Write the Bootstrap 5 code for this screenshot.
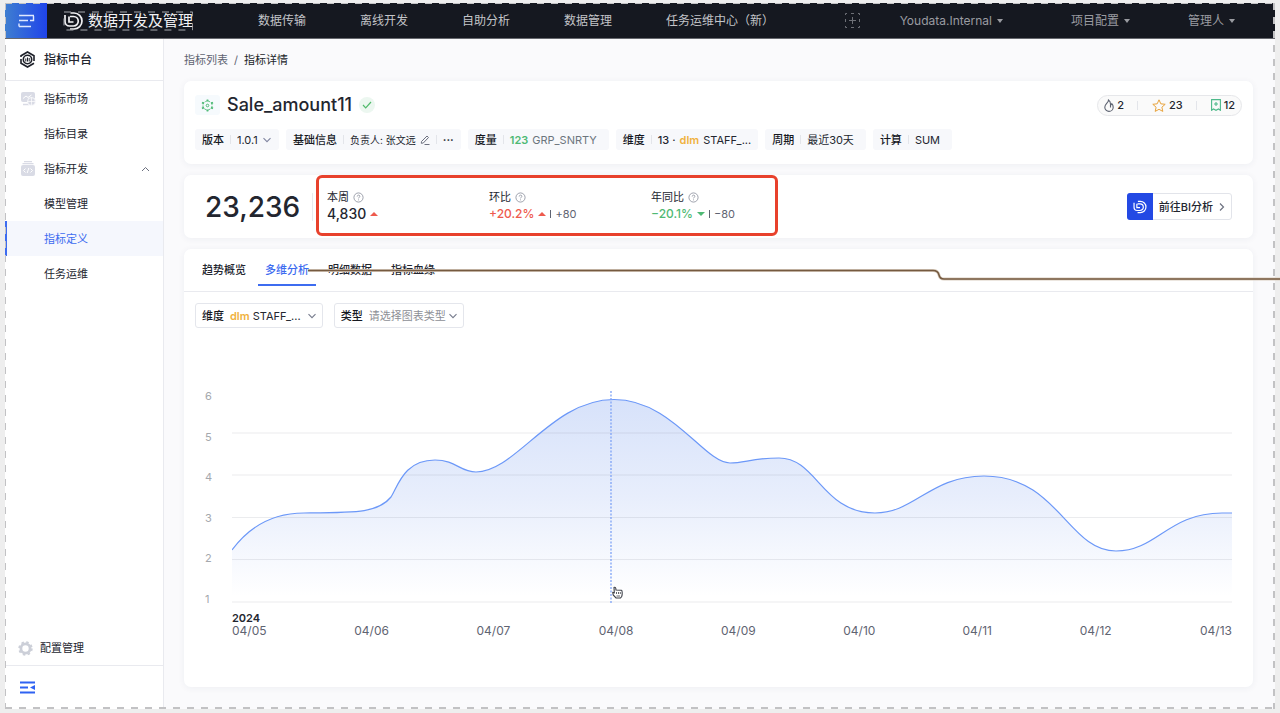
<!DOCTYPE html>
<html lang="zh-CN">
<head>
<meta charset="utf-8">
<meta name="viewport" content="width=device-width, initial-scale=1">
<title>指标详情</title>
<link href="https://cdn.jsdelivr.net/npm/bootstrap@5.3.0/dist/css/bootstrap.min.css" rel="stylesheet">
<style>
  :root { --ink:#23262f; --soft:#5f6472; --line:#e9eaef; --brand:#3d6cf0; --chip:#f7f8fb; --up:#ee5a4d; --down:#4fb974; --amber:#f0b23e; }
  body { background:#eee; color:var(--ink); font-family:Inter,"Noto Sans CJK SC",sans-serif; font-size:11px; line-height:16px; overflow-x:hidden; }
  a { color:inherit; text-decoration:none; }
  svg { display:block; flex:none; }
  .fw-mid { font-weight:500; }
  .frame { margin:3px 5px 4px; min-height:calc(100vh - 7px); background:#fafafc; }
  .frame::after { content:""; position:absolute; inset:0; pointer-events:none;
    background:
      repeating-linear-gradient(90deg,#c2c2c4 0 7px,transparent 7px 14px) top/100% 1px no-repeat,
      repeating-linear-gradient(90deg,#c2c2c4 0 7px,transparent 7px 14px) bottom/100% 2px no-repeat,
      repeating-linear-gradient(#c2c2c4 0 7px,transparent 7px 14px) left/1px 100% no-repeat,
      repeating-linear-gradient(#c2c2c4 0 7px,transparent 7px 14px) right/2px 100% no-repeat; }
  .topbar { height:36px; background:#151820; color:#c3c4c8; font-size:12px; border-radius:0 3px 0 0; border-bottom:1px solid #66686e; padding-right:40px; }
  .menu-btn { width:42px; background:linear-gradient(90deg,#3f7ed0,#1f44ea); border:0; }
  .brand-text { font-size:15px; color:#f2f2f4; }
  .main-links { gap:54px; margin-left:65px; }
  .dim { color:#9a9ba1; }
  .dim a { gap:5px; }
  .project-link { margin:0 58px 0 68px; }
  .caret { border:3px solid transparent; border-top:4px solid currentColor; border-bottom:0; }
  .add-box { color:#6d6f76; margin-right:40px; }
  .side { width:159px; background:#fff; border-right:1px solid var(--line); }
  .side-title { height:42px; font-size:12px; border-bottom:1px solid var(--line); padding-left:14px; gap:8px; }
  .side-link { height:35px; padding:0 13px 0 38px; border-left:1px solid transparent; }
  .side-link.with-icon { padding-left:14px; gap:8px; }
  .side-link.current { background:#f5f7fd; color:var(--brand); border-left:2px solid var(--brand); padding-left:37px; }
  .side-foot { height:35px; padding-left:13px; gap:7px; border-bottom:1px solid var(--line); }
  .side-toggle { height:43px; padding-left:15px; }
  .content-area { padding:12px 22px 22px 20px; gap:11px; }
  .crumbs { height:18px; margin-bottom:1px; gap:6px; color:var(--soft); }
  .panel { background:#fff; border-radius:7px; box-shadow:0 1px 7px rgba(40,45,80,.06); }
  .head-panel { padding:12px 11px 14px; gap:12px; }
  .hex-box { width:25px; height:20px; background:#f6fafd; border-radius:3px; }
  .metric-name { font-size:18px; line-height:24px; font-weight:500; margin:0 7px; }
  .ok-dot { width:16px; height:16px; border-radius:50%; background:#ecf7f0; }
  .stats { height:21px; border:1px solid #e6e7ea; border-radius:11px; background:#fafafa; padding:0 6px; }
  .stats button { gap:3px; font-weight:500; color:var(--ink); }
  .stats .vr-thin { margin:0 14px 0 13px; }
  .chips { gap:7px; }
  .chip { height:21px; background:var(--chip); border-radius:3px; padding:0 7px; }
  .chip.roomy { padding-right:12px; }
  .owner { font-size:10px; }
  .chip b, .pick label { font-weight:500; color:#16181f; }
  .vr-thin { width:1px; height:9px; background:#e3e5ea; margin:0 6px; }
  .chip select, .pick select { appearance:none; border:0; background:transparent; padding:0; color:inherit; font:inherit; outline:0; }
  .kpi-panel { padding-right:21px; min-height:63px; }
  .kpi-total { font-size:28px; line-height:32px; font-weight:500; padding-left:21px; width:128px; }
  .kpi-rule { width:1px; height:28px; background:var(--line); }
  .kpi-box { width:462px; height:61px; border:3px solid #e8412c; border-radius:6px; margin-left:3px; padding:0 8px; }
  .kpi-item { width:162px; }
  .kpi-value { font-size:14px; line-height:17px; font-weight:500; }
  .kpi-rate { font-size:12px; line-height:17px; font-weight:500; }
  .delta { font-size:11px; font-weight:400; color:var(--soft); border-left:1px solid var(--soft); line-height:8px; padding-left:4px; }
  .tri-up { border:4px solid transparent; border-bottom:4px solid var(--up); border-top:0; }
  .tri-down { border:4px solid transparent; border-top:4px solid var(--down); border-bottom:0; }
  .up { color:var(--up); } .down { color:var(--down); } .amber { color:var(--amber); }
  .bi-btn { height:27px; border:1px solid #e2e4ea; border-radius:3px; background:#fff; padding:0 6px 0 0; color:var(--ink); gap:6px; }
  .bi-logo { width:26px; height:27px; background:#2349e4; border-radius:3px 0 0 3px; margin-left:-1px; }
  .tabs-row { height:43px; gap:5px; padding-left:11px; border-bottom:1px solid var(--line); }
  .tabs-row button { border:0; border-bottom:2px solid transparent; background:none; padding:7px 7px 0; height:37px; font-weight:500; color:var(--ink); }
  .tabs-row button.active { color:var(--brand); border-color:var(--brand); }
  .pickers { padding:11px; gap:11px; }
  .pick { height:25px; border:1px solid #e4e6ec; border-radius:3px; padding:0 5px 0 6px; }
  .pick select { width:50px; margin-left:3px; } .pick select.wide { width:77px; margin:0 2px 0 6px; color:#8d8f96; }
  .tag-dim { margin-left:6px; }
  .plot-row { margin:51px 21px 0; }
  .y-axis { width:27px; height:215px; color:#a5a8ad; line-height:12px; }
  .plot { height:212px; margin-top:1px; }
  .x-axis { margin:7px 21px 20px 48px; font-size:12px; line-height:13px; color:var(--soft); display:grid; grid-template-columns:122fr 122fr 122fr 122fr 122fr 119fr 117fr 120fr auto; align-items:end; }
  .x-axis b { display:block; font-size:11px; line-height:12px; font-weight:600; color:var(--ink); }
  .hand { left:380px; top:195px; }
  .leader { left:308px; top:266px; width:calc(100% - 308px); height:18px; pointer-events:none; }
</style>
</head>
<body>
<svg width="0" height="0" class="position-absolute" aria-hidden="true">
  <symbol id="dlogo" viewBox="0 0 20 20"><path d="M7 2h3.500a8 8 0 0 1 0 16H6.500M1.500 4v6.500a4.500 4.500 0 0 0 4.500 4.500h4a4.700 4.700 0 0 0 0-9.500H6.500M5.500 5.500V11H10" fill="none" stroke="currentColor" stroke-width="1.700"/></symbol>
  <symbol id="down" viewBox="0 0 10 10"><path d="M1.500 3.200 5 6.700l3.500-3.500" fill="none" stroke="currentColor" stroke-width="1.100"/></symbol>
  <symbol id="help" viewBox="0 0 12 12"><circle cx="6" cy="6" r="5" fill="none" stroke="#8b8f9b" stroke-width=".9"/><path d="M4.600 4.900c0-2 2.900-1.900 2.900-.2 0 1-1.500 1.100-1.500 2.300M6 8.100v1" fill="none" stroke="#8b8f9b" stroke-width=".9"/></symbol>
</svg>

<div class="frame position-relative d-flex flex-column">
  <header class="topbar d-flex align-items-center">
    <button class="menu-btn align-self-stretch d-flex align-items-center justify-content-center p-0" aria-label="菜单">
      <svg width="17" height="14" viewBox="0 0 17 14" fill="none" stroke="#dfe8ff" stroke-width="1.400"><path d="M1 1.500h15M1 6.500h9M1 12.500h12M12 6.500h3.500V2M1 9.500v3"/></svg>
    </button>
    <a href="#" class="d-flex align-items-center ms-3 gap-1 position-relative">
      <svg width="21" height="20" color="#f2f2f4"><use href="#dlogo"/></svg><span class="brand-text">数据开发及管理</span>
      <svg class="position-absolute start-0 top-0 w-100 h-100" fill="none" stroke="#a9abb1"><rect x="1" y="1" width="99%" height="90%" stroke-dasharray="7 7"/></svg>
    </a>
    <nav class="main-links d-flex text-nowrap">
      <a href="#">数据传输</a><a href="#">离线开发</a><a href="#">自助分析</a><a href="#">数据管理</a><a href="#">任务运维中心（新）</a>
    </nav>
    <div class="dim d-flex align-items-center ms-auto text-nowrap">
      <button class="add-box btn p-0 border-0" aria-label="添加"><svg width="15" height="15" viewBox="0 0 15 15" fill="none" stroke="currentColor"><path d="M.5 2V.5H2M6 .5h3M13 .5h1.500V2M14.500 6v3M14.500 13v1.500H13M9 14.500H6M2 14.500H.5V13M.5 9V6M7.500 4v7M4 7.500h7"/></svg></button>
      <a href="#" class="d-flex align-items-center">Youdata.Internal <i class="caret"></i></a>
      <a href="#" class="project-link d-flex align-items-center">项目配置 <i class="caret"></i></a>
      <a href="#" class="d-flex align-items-center">管理人 <i class="caret"></i></a>
    </div>
  </header>

  <div class="d-flex flex-grow-1">
    <aside class="side d-flex flex-column flex-shrink-0">
      <div class="side-title d-flex align-items-center fw-mid">
        <svg width="17" height="17" viewBox="0 0 17 17" fill="none" stroke="#1d2029" stroke-width="1.600"><path d="M2 6V4.800L8.500 1 15 4.800V10M15 12.200 8.500 16 2 12.200V8"/><circle cx="8.500" cy="8.500" r="4.200"/><path d="M6.800 7.500v3M8.500 6.500v4M10.200 7v3.500" stroke-width="1"/></svg>
        指标中台
      </div>
      <nav>
        <a href="#" class="side-link with-icon d-flex align-items-center">
          <svg width="16" height="15" viewBox="0 0 16 15"><rect x="1" y="1" width="14" height="10" rx="2" fill="#d9dbe5"/><path d="M3 13.500h6" stroke="#d9dbe5" stroke-width="1.500"/><path d="m3 7.500 3-2.500 2 1.500L11.500 4" fill="none" stroke="#fff"/><circle cx="11.500" cy="10.500" r="4" fill="#d9dbe5" stroke="#fff" stroke-width=".8"/><path d="M7.500 10.500h8M11.500 6.500v8" stroke="#fff" stroke-width=".7"/></svg>指标市场</a>
        <a href="#" class="side-link d-flex align-items-center">指标目录</a>
        <a href="#" class="side-link with-icon d-flex align-items-center">
          <svg width="16" height="15" viewBox="0 0 16 15"><path d="M4 .7h8M2.500 2.700h11" stroke="#d9dbe5" stroke-width="1.200"/><rect x="1" y="4" width="14" height="11" rx="2" fill="#d9dbe5"/><path d="m5.500 7.500-2 2 2 2M10.500 7.500l2 2-2 2M8.800 7l-1.600 5" fill="none" stroke="#fff"/></svg>指标开发
          <svg class="ms-auto" width="9" height="6" viewBox="0 0 9 6"><path d="m1 5 3.500-3.500L8 5" fill="none" stroke="#6d7180"/></svg></a>
        <a href="#" class="side-link d-flex align-items-center">模型管理</a>
        <a href="#" class="side-link current d-flex align-items-center">指标定义</a>
        <a href="#" class="side-link d-flex align-items-center">任务运维</a>
      </nav>
      <a href="#" class="side-foot d-flex align-items-center mt-auto">
        <svg width="15" height="15" viewBox="0 0 15 15" fill="none" stroke="#cccfd8"><circle cx="7.500" cy="7.500" r="4.600" stroke-width="2.800"/><circle cx="7.500" cy="7.500" r="6.300" stroke-width="1.800" stroke-dasharray="2.500 2.448"/></svg>配置管理</a>
      <button class="side-toggle btn border-0 rounded-0 py-0 text-start" aria-label="收起">
        <svg width="15" height="13" viewBox="0 0 15 13"><path d="M0 1.500h15M0 6.500h8M0 11.500h15" stroke="#2f62f2" stroke-width="2"/><path d="m10 6.500 5-2.500v5z" fill="#2f62f2"/></svg></button>
    </aside>

    <main class="content-area d-flex flex-column flex-grow-1">
      <nav class="crumbs d-flex align-items-center"><a href="#">指标列表</a><span>/</span><span class="text-dark">指标详情</span></nav>

      <section class="panel head-panel d-flex flex-column">
        <div class="d-flex align-items-center">
          <span class="hex-box d-flex align-items-center justify-content-center"><svg width="13" height="13" viewBox="0 0 13 13" fill="none" stroke="#52bb78"><path d="M6.500 1.500 11 4v5l-4.500 2.500L2 9V4z" stroke-width=".9" stroke-dasharray="3 1"/><circle cx="6.500" cy="6.500" r="1.300"/><path d="M6.500.5v2M6.500 10.500v2M1 3.500l2 1M10 8.500l2 1M1 9.500l2-1M10 4.500l2-1" stroke-width="1.700"/></svg></span>
          <h1 class="metric-name">Sale_amount11</h1>
          <span class="ok-dot d-flex align-items-center justify-content-center"><svg width="10" height="8" viewBox="0 0 10 8"><path d="m1 4 2.700 2.800L9 1" fill="none" stroke="#52bb6c" stroke-width="1.200"/></svg></span>
          <div class="stats d-flex align-items-center ms-auto">
            <button class="d-flex align-items-center border-0 bg-transparent p-0"><svg width="10" height="13" viewBox="0 0 10 13" fill="none" stroke="#5c6270" stroke-width="1.100"><path d="M4.500 1C4.500 4 .8 5 .8 8.200a4.200 4.200 0 0 0 8.400 0c0-1.500-.6-2.700-1.400-3.500-.3 1-.7 1.300-1.300 1.500C6.700 4 6 2 4.500 1zM6.500 6.300v2.200"/></svg>2</button>
            <i class="vr-thin"></i>
            <button class="d-flex align-items-center border-0 bg-transparent p-0"><svg width="14" height="13" viewBox="0 0 14 13"><path d="m7 .8 1.800 4 4.400.5-3.300 2.900.9 4.200L7 10.300l-3.800 2.100.9-4.200L.8 5.300l4.400-.5z" fill="none" stroke="#e8a33c"/></svg>23</button>
            <i class="vr-thin"></i>
            <button class="d-flex align-items-center border-0 bg-transparent p-0"><svg width="10" height="12" viewBox="0 0 10 12" fill="none" stroke="#4db98a" stroke-width="1.100"><path d="M.6.6h8.800v10.700L7.500 10 5 11.300 2.500 10 .6 11.300zM5 3v4M3 5h4"/></svg>12</button>
          </div>
        </div>
        <div class="chips d-flex flex-wrap">
          <div class="chip d-flex align-items-center"><b><label for="ver">版本</label></b><i class="vr-thin"></i><select id="ver" class="fw-mid"><option>1.0.1</option></select><svg class="ms-1" width="10" height="10" color="#8085a0"><use href="#down"/></svg></div>
          <div class="chip d-flex align-items-center"><b>基础信息</b><i class="vr-thin"></i><span class="owner">负责人: 张文远</span><svg class="ms-1" width="10" height="10" viewBox="0 0 10 10" fill="none" stroke="#6d7180"><path d="M1.500 6.500 7 1l1.500 1.500L3.300 8l-2 .3zM4.500 9.500H9.500"/></svg><i class="vr-thin"></i><span class="fw-bold">···</span></div>
          <div class="chip roomy d-flex align-items-center"><b>度量</b><i class="vr-thin"></i><span class="down fw-semibold me-1">123</span><span class="text-secondary">GRP_SNRTY</span></div>
          <div class="chip d-flex align-items-center"><b>维度</b><i class="vr-thin"></i><span class="fw-mid">13 ·</span><span class="amber fw-semibold mx-1">dlm</span><span>STAFF_...</span></div>
          <div class="chip roomy d-flex align-items-center"><b>周期</b><i class="vr-thin"></i><span>最近30天</span></div>
          <div class="chip roomy d-flex align-items-center"><b>计算</b><i class="vr-thin"></i><span>SUM</span></div>
        </div>
      </section>

      <section class="panel kpi-panel d-flex align-items-center">
        <div class="kpi-total">23,236</div><i class="kpi-rule"></i>
        <div class="kpi-box d-flex align-items-center align-self-start">
          <div class="kpi-item"><div class="d-flex align-items-center gap-1">本周<svg width="11" height="11"><use href="#help"/></svg></div><div class="kpi-value d-flex align-items-center gap-1">4,830<i class="tri-up"></i></div></div>
          <div class="kpi-item"><div class="d-flex align-items-center gap-1">环比<svg width="11" height="11"><use href="#help"/></svg></div><div class="kpi-rate up d-flex align-items-center gap-1">+20.2%<i class="tri-up"></i><span class="delta">+80</span></div></div>
          <div><div class="d-flex align-items-center gap-1">年同比<svg width="11" height="11"><use href="#help"/></svg></div><div class="kpi-rate down d-flex align-items-center gap-1">−20.1%<i class="tri-down"></i><span class="delta">−80</span></div></div>
        </div>
        <button class="bi-btn d-flex align-items-center ms-auto"><span class="bi-logo d-flex align-items-center justify-content-center text-white"><svg width="14" height="14"><use href="#dlogo"/></svg></span><span class="fw-mid">前往BI分析</span><svg width="6" height="10" viewBox="0 0 6 10"><path d="m1 1.500 3.500 3.500L1 8.500" fill="none" stroke="#6d7180" stroke-width="1.200"/></svg></button>
      </section>

      <section class="panel flex-grow-1">
        <div class="tabs-row d-flex" role="tablist"><button role="tab">趋势概览</button><button role="tab" class="active">多维分析</button><button role="tab">明细数据</button><button role="tab">指标血缘</button></div>
        <div class="pickers d-flex">
          <div class="pick d-flex align-items-center"><label for="dim">维度</label><span class="tag-dim amber fw-semibold">dlm</span><select id="dim"><option>STAFF_...</option></select><svg class="ms-1" width="10" height="10" color="#767b8c"><use href="#down"/></svg></div>
          <div class="pick d-flex align-items-center"><label for="kind">类型</label><select id="kind" class="wide"><option>请选择图表类型</option></select><svg width="10" height="10" color="#767b8c"><use href="#down"/></svg></div>
        </div>
        <div class="plot-row d-flex">
          <div class="y-axis d-flex flex-column justify-content-between"><span>6</span><span>5</span><span>4</span><span>3</span><span>2</span><span>1</span></div>
          <div class="plot flex-grow-1 position-relative">
            <svg class="w-100 h-100" viewBox="0 0 1000 212" preserveAspectRatio="none" fill="none">
              <defs><linearGradient id="fade" x1="0" y1="8" x2="0" y2="205" gradientUnits="userSpaceOnUse"><stop stop-color="#d7e2fa"/><stop offset=".5" stop-color="#e8eefc"/><stop offset="1" stop-color="#fff"/></linearGradient></defs>
              <path fill="url(#fade)" d="M0 159C20 132 45 122 72 122C125 121.500 146 122 159 106C166 95 172 69 203 69C224 69 228 81 244 81C284 81 320 8.500 382 8.500C440 8.500 472 72 498 72C513 72 520 67 547 67C585 67 590 122 643 122C683 122 698 85 752 85C826 85 836 160 884 160C925 160 936 122 990 122H1000V211H0Z"/>
              <path d="M0 42h1000M0 84h1000M0 126.500h1000M0 168.500h1000M0 211h1000" stroke="#707684" stroke-opacity=".14" vector-effect="non-scaling-stroke"/>
              <path stroke="#6c98f8" stroke-width="1.200" vector-effect="non-scaling-stroke" d="M0 159C20 132 45 122 72 122C125 121.500 146 122 159 106C166 95 172 69 203 69C224 69 228 81 244 81C284 81 320 8.500 382 8.500C440 8.500 472 72 498 72C513 72 520 67 547 67C585 67 590 122 643 122C683 122 698 85 752 85C826 85 836 160 884 160C925 160 936 122 990 122H1000"/>
              <path d="M379 0v212" stroke="#7ea3f6" stroke-width="1.300" stroke-dasharray="2 1.500" vector-effect="non-scaling-stroke"/>
            </svg>
            <svg class="hand position-absolute" width="11" height="13" viewBox="0 0 11 13"><path d="M2 1.500c.9-.7 1.700 0 1.800 1L4 4l5.500.3c.8.2 1 4 .2 6.200L8.500 12H4L1.200 9 .8 6.500l1.500.3z" fill="#fff" stroke="#3a3d46" stroke-width="1.100"/><path d="M4.500 6v2M6.500 6v2M8.300 6v2M4.500 10h3.500" stroke="#3a3d46" stroke-width=".8"/></svg>
          </div>
        </div>
        <div class="x-axis"><span><b>2024</b>04/05</span><span>04/06</span><span>04/07</span><span>04/08</span><span>04/09</span><span>04/10</span><span>04/11</span><span>04/12</span><span>04/13</span></div>
      </section>
    </main>
  </div>
</div>
<!-- callout line leading out of the active tab -->
<svg class="leader position-absolute" fill="none"><path d="M0 4.500H625Q630 4.500 631 9T637 13H3000" stroke="#d9cdbf" stroke-width="3"/><path d="M0 4.500H625Q630 4.500 631 9T637 13H3000" stroke="#755a40" stroke-width="1.500"/></svg>
<script src="https://cdn.jsdelivr.net/npm/bootstrap@5.3.0/dist/js/bootstrap.bundle.min.js"></script>
</body>
</html>
